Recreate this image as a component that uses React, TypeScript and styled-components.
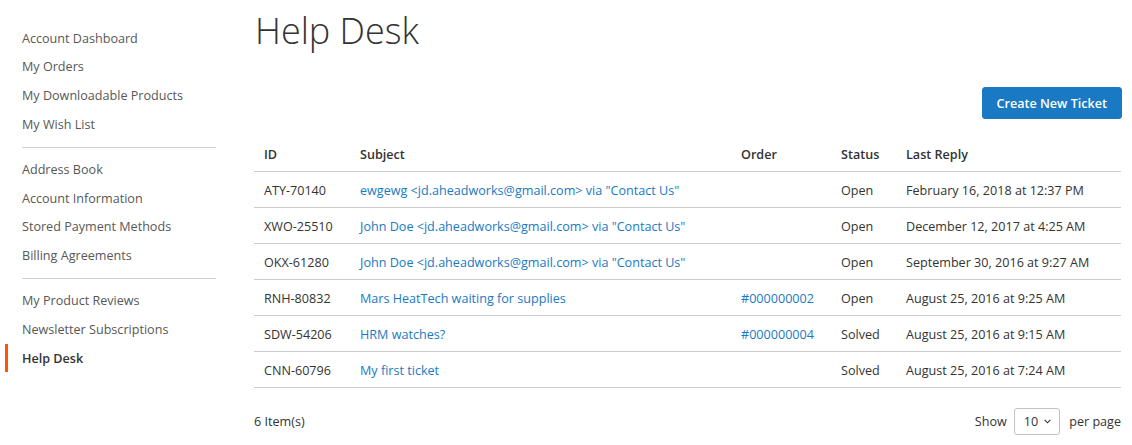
import React from "react";
import styled, { createGlobalStyle } from "styled-components";

const GlobalStyle = createGlobalStyle`
  html, body { margin: 0; padding: 0; background: #fff; }
  body {
    font-family: "Open Sans", "Liberation Sans", sans-serif;
    font-size: 12.6px;
    color: #333;
  }
  * { box-sizing: border-box; }
`;

const Page = styled.div`
  display: flex;
  width: 1132px;
  min-height: 445px;
`;

const Sidebar = styled.nav`
  flex: 0 0 216px;
  padding: 23.5px 0 0 5px;
`;

const NavList = styled.ul`
  list-style: none;
  margin: 0;
  padding: 0;
`;

const NavItem = styled.li<{ $active?: boolean }>`
  padding: 6px 0 4px 14px;
  line-height: 18.7px;
  border-left: 3px solid ${(p) => (p.$active ? "#ff5501" : "transparent")};
  color: ${(p) => (p.$active ? "#333" : "#575757")};
  font-weight: ${(p) => (p.$active ? 600 : 400)};
  white-space: nowrap;
`;

const NavDivider = styled.li`
  height: 1px;
  margin: 8.5px 0 7px 17px;
  background: #d1d1d1;
`;

const Main = styled.main`
  flex: 1;
  margin-left: 38px;
  padding-right: 11px;
  display: flex;
  flex-direction: column;
`;

const Title = styled.h1`
  margin: 7px 0 0 1px;
  font-size: 36px;
  font-weight: 300;
  line-height: 48px;
  color: #333;
`;

const Actions = styled.div`
  display: flex;
  justify-content: flex-end;
  margin-top: 32px;
  margin-right: -1px;
`;

const PrimaryButton = styled.button`
  height: 32px;
  padding: 0 14px;
  background: #1979c3;
  border: 1px solid #1979c3;
  border-radius: 3px;
  color: #fff;
  font-family: "Open Sans", "Liberation Sans", sans-serif;
  font-size: 12.6px;
  font-weight: 600;
  cursor: pointer;
`;

const Table = styled.table`
  width: 867px;
  margin-top: 17px;
  border-collapse: collapse;
  table-layout: fixed;
`;

const HeadCell = styled.th<{ $w: number }>`
  width: ${(p) => p.$w}px;
  padding: 9px 10px 7px;
  line-height: 19px;
  text-align: left;
  font-weight: 600;
  color: #333;
  border-bottom: 1px solid #ccc;
`;

const Row = styled.tr`
  border-bottom: 1px solid #ccc;
`;

const Cell = styled.td`
  padding: 9px 10px 7px;
  line-height: 19px;
  color: #333;
  white-space: nowrap;
  overflow: hidden;
`;

const Link = styled.a`
  color: #1979c3;
  text-decoration: none;
`;

const Toolbar = styled.div`
  display: flex;
  align-items: center;
  justify-content: space-between;
  margin-top: 20px;
`;

const Amount = styled.span`
  color: #333;
`;

const Limiter = styled.div`
  display: flex;
  align-items: center;
  color: #333;
`;

const SelectBox = styled.div`
  display: inline-flex;
  align-items: center;
  gap: 6px;
  height: 27px;
  margin: 0 9px 0 7px;
  padding: 0 8px 0 9px;
  border: 1px solid #c2c2c2;
  border-radius: 3px;
  background: #fff;
`;

const columns = [
  { label: "ID", w: 96 },
  { label: "Subject", w: 381 },
  { label: "Order", w: 100 },
  { label: "Status", w: 65 },
  { label: "Last Reply", w: 225 },
];

const tickets = [
  { id: "ATY-70140", subject: 'ewgewg <jd.aheadworks@gmail.com> via "Contact Us"', order: "", status: "Open", reply: "February 16, 2018 at 12:37 PM" },
  { id: "XWO-25510", subject: 'John Doe <jd.aheadworks@gmail.com> via "Contact Us"', order: "", status: "Open", reply: "December 12, 2017 at 4:25 AM" },
  { id: "OKX-61280", subject: 'John Doe <jd.aheadworks@gmail.com> via "Contact Us"', order: "", status: "Open", reply: "September 30, 2016 at 9:27 AM" },
  { id: "RNH-80832", subject: "Mars HeatTech waiting for supplies", order: "#000000002", status: "Open", reply: "August 25, 2016 at 9:25 AM" },
  { id: "SDW-54206", subject: "HRM watches?", order: "#000000004", status: "Solved", reply: "August 25, 2016 at 9:15 AM" },
  { id: "CNN-60796", subject: "My first ticket", order: "", status: "Solved", reply: "August 25, 2016 at 7:24 AM" },
];

const navGroups = [
  ["Account Dashboard", "My Orders", "My Downloadable Products", "My Wish List"],
  ["Address Book", "Account Information", "Stored Payment Methods", "Billing Agreements"],
  ["My Product Reviews", "Newsletter Subscriptions", "Help Desk"],
];

const Chevron = () => (
  <svg width="7" height="5" viewBox="0 0 7 5" fill="none">
    <path d="M0.6 0.9l2.9 2.9 2.9-2.9" stroke="#333" strokeWidth="1.1" />
  </svg>
);

export default function App() {
  return (
    <>
      <GlobalStyle />
      <Page>
        <Sidebar>
          <NavList>
            {navGroups.map((group, gi) => (
              <React.Fragment key={gi}>
                {gi > 0 && <NavDivider />}
                {group.map((item) => (
                  <NavItem key={item} $active={item === "Help Desk"}>
                    {item}
                  </NavItem>
                ))}
              </React.Fragment>
            ))}
          </NavList>
        </Sidebar>
        <Main>
          <Title>Help Desk</Title>
          <Actions>
            <PrimaryButton>Create New Ticket</PrimaryButton>
          </Actions>
          <Table>
            <thead>
              <tr>
                {columns.map((c) => (
                  <HeadCell key={c.label} $w={c.w}>
                    {c.label}
                  </HeadCell>
                ))}
              </tr>
            </thead>
            <tbody>
              {tickets.map((t) => (
                <Row key={t.id}>
                  <Cell>{t.id}</Cell>
                  <Cell>
                    <Link href="#">{t.subject}</Link>
                  </Cell>
                  <Cell>{t.order && <Link href="#">{t.order}</Link>}</Cell>
                  <Cell>{t.status}</Cell>
                  <Cell>{t.reply}</Cell>
                </Row>
              ))}
            </tbody>
          </Table>
          <Toolbar>
            <Amount>6 Item(s)</Amount>
            <Limiter>
              Show
              <SelectBox>
                <span>10</span>
                <Chevron />
              </SelectBox>
              per page
            </Limiter>
          </Toolbar>
        </Main>
      </Page>
    </>
  );
}
